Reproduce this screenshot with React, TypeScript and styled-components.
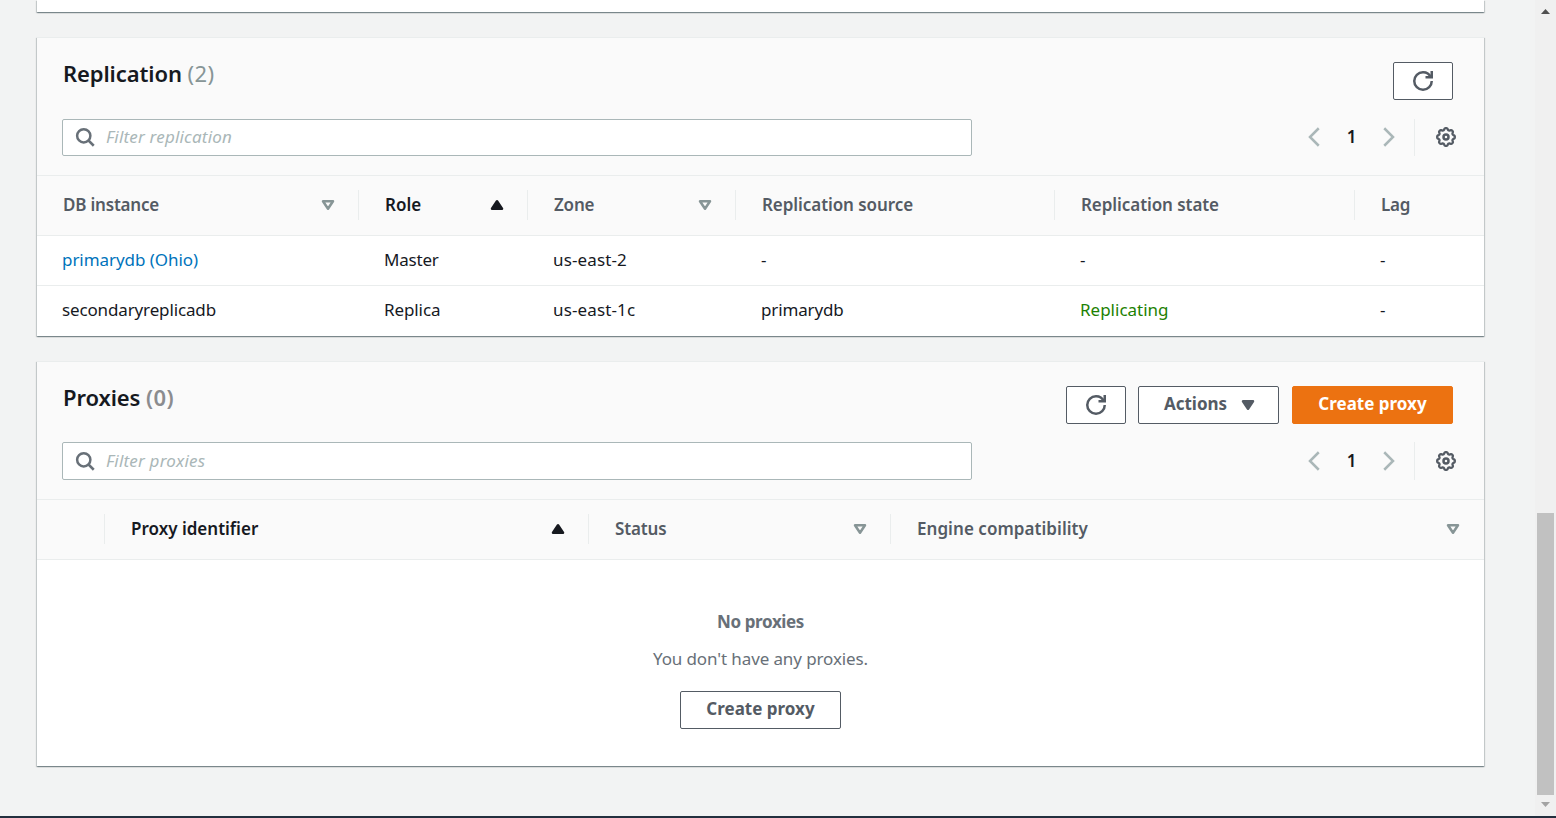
import React from 'react';
import styled, { createGlobalStyle } from 'styled-components';

const GlobalStyle = createGlobalStyle`
  *, *::before, *::after { box-sizing: border-box; }
  body {
    margin: 0;
    background: #f2f3f3;
    color: #16191f;
    font-family: 'Noto Sans', 'Open Sans', sans-serif;
    font-size: 17px;
    line-height: 24px;
  }
`;

const Page = styled.div`
  display: flex;
  flex-direction: column;
  height: 818px;
  overflow: hidden;
`;

const Viewport = styled.div`
  display: flex;
  flex: 1;
  min-height: 0;
`;

const Content = styled.main`
  flex: 1;
  min-width: 0;
  display: flex;
  flex-direction: column;
  gap: 25px;
  padding: 0 51px 0 37px;
  overflow: hidden;
`;

const FooterEdge = styled.div`
  height: 2px;
  background: #232f3e;
`;

const Card = styled.section<{ $height: number; $bare?: boolean }>`
  flex: none;
  display: flex;
  flex-direction: column;
  height: ${(p) => p.$height}px;
  background: #fff;
  border-top: ${(p) => (p.$bare ? 'none' : '1px solid #eaeded')};
  box-shadow:
    0 1px 1px 0 rgba(0, 28, 36, 0.3),
    1px 1px 1px 0 rgba(0, 28, 36, 0.15),
    -1px 1px 1px 0 rgba(0, 28, 36, 0.15);
`;

const CardHeader = styled.header`
  flex: none;
  height: 137px;
  padding: 24px 25px 0;
  background: #fafafa;
`;

const TitleRow = styled.div<{ $tall?: boolean }>`
  display: flex;
  justify-content: space-between;
  height: ${(p) => (p.$tall ? 57 : 56)}px;
  padding: 0 6px 0 1px;
`;

const Title = styled.h2`
  margin: 0;
  font-size: 22px;
  font-weight: 600;
  line-height: 23px;
  letter-spacing: -0.1px;
  white-space: pre;
`;

const Count = styled.span<{ $bold?: boolean }>`
  font-weight: ${(p) => (p.$bold ? 600 : 400)};
  color: ${(p) => (p.$bold ? '#8b8c8f' : '#879596')};
  letter-spacing: 0.45px;
`;

const Actions = styled.div`
  display: flex;
  gap: 12px;
`;

const Button = styled.button<{ $width: number; $primary?: boolean; $menu?: boolean }>`
  display: flex;
  align-items: center;
  justify-content: center;
  gap: 11px;
  width: ${(p) => p.$width}px;
  height: 38px;
  margin: 0 ${(p) => (p.$menu ? 1 : 0)}px 0 0;
  padding: 0 0 1px ${(p) => (p.$menu ? 5 : 0)}px;
  border: 1px solid ${(p) => (p.$primary ? '#ec7211' : '#545b64')};
  border-radius: 2px;
  background: ${(p) => (p.$primary ? '#ec7211' : '#fff')};
  color: ${(p) => (p.$primary ? '#fff' : '#545b64')};
  font: 700 17px/24px 'Noto Sans', 'Open Sans', sans-serif;
`;

const Label = styled.span`
  padding-bottom: 2px;
`;

const FilterRow = styled.div<{ $height: number }>`
  display: flex;
  justify-content: space-between;
  height: ${(p) => p.$height}px;

  svg {
    margin-bottom: ${(p) => 38 - p.$height}px;
  }
`;

const Search = styled.label`
  display: flex;
  align-items: center;
  gap: 11px;
  width: 910px;
  padding: 0 12px;
  border: 1px solid #aab7b8;
  border-radius: 2px;
  background: #fff;
  color: #687078;
`;

const Placeholder = styled.span`
  padding-bottom: 1px;
  color: #aab7b8;
  font-style: italic;
  letter-spacing: 0.2px;
`;

const Pager = styled.div`
  display: flex;
  align-items: center;
  color: #aab7b8;
`;

const PageNumber = styled.span`
  width: 53px;
  padding-bottom: 1px;
  color: #16191f;
  font-weight: 600;
  text-align: center;
`;

const Settings = styled.div`
  display: flex;
  align-items: center;
  align-self: stretch;
  margin-left: 16px;
  padding: 0 3px 0 21px;
  border-left: 1px solid #eaeded;
  color: #545b64;
`;

const GridRow = styled.div<{ $columns: string; $head?: boolean; $last?: boolean }>`
  flex: none;
  display: grid;
  grid-template-columns: ${(p) => p.$columns};
  align-items: ${(p) => (p.$head ? 'start' : 'center')};
  height: ${(p) => (p.$head ? 61 : 50)}px;
  padding-top: ${(p) => (p.$head ? 14 : 0)}px;
  background: ${(p) => (p.$head ? '#fafafa' : '#fff')};
  border-top: ${(p) => (p.$head ? '1px solid #eaeded' : 'none')};
  border-bottom: 1px solid ${(p) => (p.$last ? 'transparent' : '#eaeded')};
`;

const HeadCell = styled.div<{ $active?: boolean; $last?: boolean; $track?: number }>`
  display: flex;
  align-items: center;
  justify-content: space-between;
  height: 30px;
  padding: 0 ${(p) => (p.$last ? 21 : 20)}px 0 26px;
  border-right: ${(p) => (p.$last ? 'none' : '1px solid #eaeded')};
  color: ${(p) => (p.$active ? '#16191f' : '#545b64')};
  font-weight: 600;
  letter-spacing: ${(p) => p.$track ?? 0}px;
  white-space: nowrap;
`;

const Cell = styled.div<{ $tone?: 'link' | 'success'; $track?: number }>`
  padding: 0 0 1px 25px;
  color: ${(p) => (p.$tone === 'link' ? '#0073bb' : p.$tone === 'success' ? '#1d8102' : '#16191f')};
  letter-spacing: ${(p) => p.$track ?? 0}px;
  white-space: nowrap;
`;

const Empty = styled.div`
  display: flex;
  flex-direction: column;
  align-items: center;
  padding-top: 50px;
  color: #687078;
`;

const EmptyTitle = styled.strong`
  font-weight: 700;
  letter-spacing: -0.37px;
`;

const EmptyText = styled.p`
  margin: 13px 0 20px;
  letter-spacing: -0.11px;
`;

const Scrollbar = styled.div`
  display: flex;
  flex-direction: column;
  align-items: center;
  width: 21px;
  padding: 9px 2px 9px 2px;
  background: #f0f0f0;
`;

const Thumb = styled.div`
  width: 17px;
  height: 282px;
  margin: auto 0 7px;
  background: #c1c1c1;
`;

const Icon = styled.svg`
  display: block;
  flex: none;
  width: 20px;
  height: 20px;
  overflow: visible;
  fill: none;
  stroke: currentColor;
  stroke-width: 2;
`;

const SearchIcon = () => (
  <Icon viewBox="0 0 16 16">
    <circle cx="7" cy="7" r="5.3" />
    <path d="m15 15-4.4-4.4" />
  </Icon>
);

const RefreshIcon = () => (
  <Icon viewBox="0 0 16 16">
    <path d="M10 5h5V0" />
    <path d="M15 8a6.957 6.957 0 0 1-7 7 6.957 6.957 0 0 1-7-7 6.957 6.957 0 0 1 7-7 6.87 6.87 0 0 1 6.3 4" />
  </Icon>
);

const ChevronIcon = ({ right }: { right?: boolean }) => (
  <Icon viewBox="0 0 16 16">
    <path d={right ? 'm5 1 7 7-7 7' : 'M11 1 4 8l7 7'} />
  </Icon>
);

const gearOutline =
  Array.from({ length: 128 }, (_, i) => {
    const a = (i / 128) * Math.PI * 2;
    const r = 6.35 + 0.75 * Math.tanh(1.6 * Math.cos(8 * a) + 0.3);
    return `${i ? 'L' : 'M'}${(8 + r * Math.cos(a)).toFixed(2)} ${(8 + r * Math.sin(a)).toFixed(2)}`;
  }).join('') + 'Z';

const GearIcon = () => (
  <Icon viewBox="0 0 16 16">
    <path d={gearOutline} strokeWidth="1.8" strokeLinejoin="round" style={{ strokeWidth: 1.8 }} />
    <circle cx="8" cy="8" r="2" />
  </Icon>
);

const SortIcon = () => (
  <Icon viewBox="0 0 16 16" color="#879596" strokeLinejoin="round">
    <path d="M4 5h8l-4 6z" />
  </Icon>
);

const SortedIcon = () => (
  <Icon viewBox="0 0 16 16" strokeLinejoin="round">
    <path d="M4 11h8L8 5z" fill="currentColor" />
  </Icon>
);

const CaretIcon = () => (
  <Icon viewBox="0 0 16 16" strokeLinejoin="round">
    <path d="M4 5h8l-4 6z" fill="currentColor" />
  </Icon>
);

const ScrollArrow = styled.svg`
  display: block;
  width: 9px;
  height: 5px;
`;

const TableTools = ({ placeholder, height }: { placeholder: string; height: number }) => (
  <FilterRow $height={height}>
    <Search>
      <SearchIcon />
      <Placeholder>{placeholder}</Placeholder>
    </Search>
    <Pager>
      <ChevronIcon />
      <PageNumber>1</PageNumber>
      <ChevronIcon right />
      <Settings>
        <GearIcon />
      </Settings>
    </Pager>
  </FilterRow>
);

const replicationColumns = '322px 169px 208px 319px 300px 1fr';
const proxyColumns = '68px 484px 302px 1fr';

export default function App() {
  return (
    <>
      <GlobalStyle />
      <Page>
        <Viewport>
          <Content>
            <Card $height={12} $bare />

            <Card $height={299}>
              <CardHeader>
                <TitleRow $tall>
                  <Title>
                    Replication <Count>(2)</Count>
                  </Title>
                  <Actions>
                    <Button $width={60} aria-label="Refresh">
                      <RefreshIcon />
                    </Button>
                  </Actions>
                </TitleRow>
                <TableTools placeholder="Filter replication" height={37} />
              </CardHeader>
              <GridRow $columns={replicationColumns} $head>
                <HeadCell $track={-0.2}>
                  DB instance
                  <SortIcon />
                </HeadCell>
                <HeadCell $active>
                  Role
                  <SortedIcon />
                </HeadCell>
                <HeadCell $track={-0.2}>
                  Zone
                  <SortIcon />
                </HeadCell>
                <HeadCell $track={-0.07}>Replication source</HeadCell>
                <HeadCell $track={-0.07}>Replication state</HeadCell>
                <HeadCell $last $track={-0.2}>
                  Lag
                </HeadCell>
              </GridRow>
              <GridRow $columns={replicationColumns}>
                <Cell $tone="link" $track={-0.06}>
                  primarydb (Ohio)
                </Cell>
                <Cell $track={-0.2}>Master</Cell>
                <Cell $track={0.14}>us-east-2</Cell>
                <Cell>-</Cell>
                <Cell>-</Cell>
                <Cell>-</Cell>
              </GridRow>
              <GridRow $columns={replicationColumns} $last>
                <Cell $track={-0.14}>secondaryreplicadb</Cell>
                <Cell $track={-0.1}>Replica</Cell>
                <Cell $track={0.14}>us-east-1c</Cell>
                <Cell $track={-0.14}>primarydb</Cell>
                <Cell $tone="success">Replicating</Cell>
                <Cell>-</Cell>
              </GridRow>
            </Card>

            <Card $height={405}>
              <CardHeader>
                <TitleRow>
                  <Title>
                    Proxies <Count $bold>(0)</Count>
                  </Title>
                  <Actions>
                    <Button $width={60} aria-label="Refresh">
                      <RefreshIcon />
                    </Button>
                    <Button $width={141} $menu>
                      <Label>Actions</Label>
                      <CaretIcon />
                    </Button>
                    <Button $width={161} $primary>
                      <Label>Create proxy</Label>
                    </Button>
                  </Actions>
                </TitleRow>
                <TableTools placeholder="Filter proxies" height={38} />
              </CardHeader>
              <GridRow $columns={proxyColumns} $head>
                <HeadCell />
                <HeadCell $active>
                  Proxy identifier
                  <SortedIcon />
                </HeadCell>
                <HeadCell $track={-0.15}>
                  Status
                  <SortIcon />
                </HeadCell>
                <HeadCell $last $track={0.05}>
                  Engine compatibility
                  <SortIcon />
                </HeadCell>
              </GridRow>
              <Empty>
                <EmptyTitle>No proxies</EmptyTitle>
                <EmptyText>You don't have any proxies.</EmptyText>
                <Button $width={161}>
                  <Label>Create proxy</Label>
                </Button>
              </Empty>
            </Card>
          </Content>
          <Scrollbar>
            <ScrollArrow viewBox="0 0 9 5">
              <path d="M0 5 4.5 0 9 5z" fill="#505050" />
            </ScrollArrow>
            <Thumb />
            <ScrollArrow viewBox="0 0 9 5">
              <path d="M0 0h9L4.5 5z" fill="#a3a3a3" />
            </ScrollArrow>
          </Scrollbar>
        </Viewport>
        <FooterEdge />
      </Page>
    </>
  );
}
